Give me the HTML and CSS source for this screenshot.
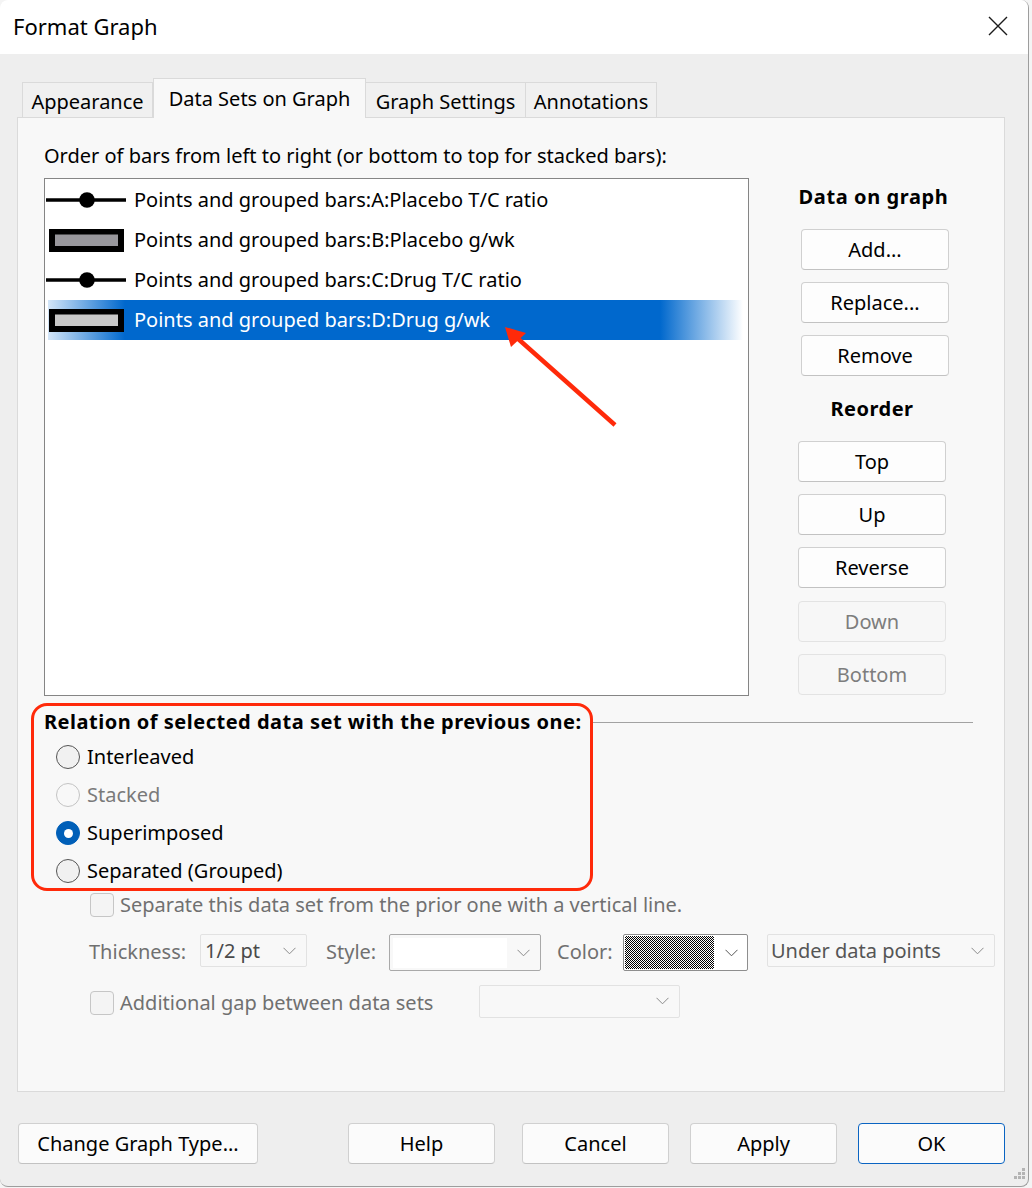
FILE: index.html
```html
<!DOCTYPE html>
<html>
<head>
<meta charset="utf-8">
<title>Format Graph</title>
<link rel="stylesheet" href="styles.css">
</head>
<body>
<div class="window">
  <div class="titlebar">
    <span class="title">Format Graph</span>
    <svg class="close" width="20" height="20" viewBox="0 0 20 20"><path d="M1 1 L19 19 M19 1 L1 19" stroke="#1b1b1b" stroke-width="1.4" fill="none"/></svg>
  </div>
  <div class="content">
    <div class="tabs">
      <div class="tab t1">Appearance</div>
      <div class="tab t2 active">Data Sets on Graph</div>
      <div class="tab t3">Graph Settings</div>
      <div class="tab t4">Annotations</div>
    </div>
    <div class="panel">
      <div class="top">
        <div class="leftcol">
          <div class="caption">Order of bars from left to right (or bottom to top for stacked bars):</div>
          <div class="listbox">
            <div class="row">
              <svg class="icon" width="80" height="40" viewBox="0 0 80 40"><line x1="0" y1="20" x2="80" y2="20" stroke="#000" stroke-width="3.5"/><circle cx="41" cy="20" r="7.8" fill="#000"/></svg>
              <span>Points and grouped bars:A:Placebo T/C ratio</span>
            </div>
            <div class="row">
              <svg class="icon" width="80" height="40" viewBox="0 0 80 40"><rect x="3" y="9" width="75" height="23" fill="#000"/><rect x="9" y="14.5" width="63" height="11.5" fill="#98979c"/></svg>
              <span>Points and grouped bars:B:Placebo g/wk</span>
            </div>
            <div class="row">
              <svg class="icon" width="80" height="40" viewBox="0 0 80 40"><line x1="0" y1="20" x2="80" y2="20" stroke="#000" stroke-width="3.5"/><circle cx="41" cy="20" r="7.8" fill="#000"/></svg>
              <span>Points and grouped bars:C:Drug T/C ratio</span>
            </div>
            <div class="row selected">
              <svg class="icon" width="80" height="40" viewBox="0 0 80 40"><rect x="3" y="9" width="75" height="23" fill="#000"/><rect x="9" y="14.5" width="63" height="11.5" fill="#c9c9c9"/></svg>
              <span>Points and grouped bars:D:Drug g/wk</span>
            </div>
          </div>
        </div>
        <div class="side">
          <div class="side-head">Data on graph</div>
          <div class="btn side-btn g1">Add...</div>
          <div class="btn side-btn g1">Replace...</div>
          <div class="btn side-btn g1">Remove</div>
          <div class="side-head reorder">Reorder</div>
          <div class="btn side-btn">Top</div>
          <div class="btn side-btn">Up</div>
          <div class="btn side-btn">Reverse</div>
          <div class="btn side-btn disabled down">Down</div>
          <div class="btn side-btn disabled">Bottom</div>
        </div>
      </div>

      <div class="relation">
        <div class="rel-head">
          <span class="rel-label">Relation of selected data set with the previous one:</span>
          <span class="rule"></span>
        </div>
        <div class="radio-row"><span class="radio"></span><span>Interleaved</span></div>
        <div class="radio-row dis"><span class="radio"></span><span>Stacked</span></div>
        <div class="radio-row"><span class="radio checked"></span><span>Superimposed</span></div>
        <div class="radio-row"><span class="radio"></span><span>Separated (Grouped)</span></div>
      </div>

      <div class="check-row first">
        <span class="checkbox"></span><span class="dim">Separate this data set from the prior one with a vertical line.</span>
      </div>

      <div class="ctrl-row">
        <span class="dim lbl-thick">Thickness:</span>
        <div class="select sel-thick"><span class="val">1/2 pt</span><svg class="chev" width="13" height="8" viewBox="0 0 13 8"><path d="M0.5 0.8 L6.5 6.8 L12.5 0.8" fill="none" stroke="#8a8a8a" stroke-width="1"/></svg></div>
        <span class="dim lbl-style">Style:</span>
        <div class="select sel-style"><span class="white-box"></span><svg class="chev" width="13" height="8" viewBox="0 0 13 8"><path d="M0.5 0.8 L6.5 6.8 L12.5 0.8" fill="none" stroke="#8a8a8a" stroke-width="1"/></svg></div>
        <span class="dim lbl-color">Color:</span>
        <div class="select sel-color"><span class="dither"></span><svg class="chev" width="13" height="8" viewBox="0 0 13 8"><path d="M0.5 0.8 L6.5 6.8 L12.5 0.8" fill="none" stroke="#555" stroke-width="1"/></svg></div>
        <div class="select sel-under"><span class="val under">Under data points</span><svg class="chev" width="13" height="8" viewBox="0 0 13 8"><path d="M0.5 0.8 L6.5 6.8 L12.5 0.8" fill="none" stroke="#8a8a8a" stroke-width="1"/></svg></div>
      </div>

      <div class="check-row gap-row">
        <span class="checkbox"></span><span class="dim gap-lbl">Additional gap between data sets</span>
        <div class="select sel-gap"><svg class="chev" width="13" height="8" viewBox="0 0 13 8"><path d="M0.5 0.8 L6.5 6.8 L12.5 0.8" fill="none" stroke="#8a8a8a" stroke-width="1"/></svg></div>
      </div>
    </div>

    <div class="footer">
      <div class="btn fbtn change">Change Graph Type...</div>
      <div class="btn fbtn help">Help</div>
      <div class="btn fbtn cancel">Cancel</div>
      <div class="btn fbtn apply">Apply</div>
      <div class="btn fbtn ok">OK</div>
    </div>
  </div>
  <svg class="grip" width="16" height="16" viewBox="0 0 16 16"><g fill="#b4b4b4"><rect x="12" y="0" width="3" height="3"/><rect x="8" y="4" width="3" height="3"/><rect x="12" y="4" width="3" height="3"/><rect x="4" y="8" width="3" height="3"/><rect x="8" y="8" width="3" height="3"/><rect x="12" y="8" width="3" height="3"/></g></svg>
</div>

<div class="redbox"></div>
<svg class="arrow" width="1032" height="1188" viewBox="0 0 1032 1188">
  <line x1="615" y1="425" x2="516" y2="337" stroke="#ff2a0a" stroke-width="4.5" stroke-linecap="butt"/>
  <polygon points="505,327 526,333 511,347" fill="#ff2a0a"/>
</svg>
</body>
</html>
```

FILE: styles.css
```css
* { box-sizing: border-box; }
html, body { margin: 0; padding: 0; }
body {
  width: 1032px;
  height: 1188px;
  overflow: hidden;
  position: relative;
  background: #f4f4f4;
  font-family: "Noto Sans", "Open Sans", sans-serif;
  font-size: 20px;
  color: #000;
}
.window {
  position: relative;
  width: 1029px;
  height: 1187px;
  background: #eeeeee;
  border-right: 1px solid #9d9d9d;
  border-bottom: 1px solid #9d9d9d;
  border-radius: 8px;
  overflow: hidden;
  display: flex;
  flex-direction: column;
}
.titlebar {
  height: 54px;
  flex: none;
  background: #ffffff;
  display: flex;
  align-items: center;
  justify-content: space-between;
  padding: 0 20px 0 13px;
}
.title { font-size: 22px; line-height: 30px; margin-top: -2px; }
.close { margin-top: -2px; }

.content {
  flex: 1;
  padding: 24px 0 0 17px;
  display: flex;
  flex-direction: column;
}
.tabs {
  display: flex;
  align-items: flex-end;
  height: 39px;
  padding-left: 5px;
  position: relative;
  z-index: 2;
}
.tab {
  height: 35px;
  display: flex;
  align-items: center;
  justify-content: center;
  background: #f0f0f0;
  border: 1px solid #dadada;
  border-bottom: none;
  line-height: 28px;
  padding-top: 3px;
}
.tab + .tab { border-left: none; }
.tab.t1 { width: 131px; }
.tab.t2 { width: 213px; }
.tab.t3 { width: 160px; }
.tab.t4 { width: 131px; }
.tab.active {
  background: #f8f8f8;
  border-left: 1px solid #dadada;
  padding-top: 0;
  margin-bottom: -1px;
  height: 40px;
}

.panel {
  width: 988px;
  height: 975px;
  flex: none;
  background: #f8f8f8;
  border: 1px solid #dadada;
  padding: 24px 0 0 26px;
  position: relative;
  z-index: 1;
}
.top { display: flex; height: 554px; }
.leftcol { width: 705px; flex: none; }
.caption { line-height: 28px; height: 28px; white-space: nowrap; }
.listbox {
  margin-top: 8px;
  width: 705px;
  height: 518px;
  background: #ffffff;
  border: 1px solid #858585;
  padding-top: 1px;
}
.row {
  height: 40px;
  display: flex;
  align-items: center;
  padding-left: 1px;
  white-space: nowrap;
}
.row .icon { flex: none; display: block; }
.row span { margin-left: 8px; line-height: 28px; }
.row.selected {
  color: #ffffff;
  background: linear-gradient(to right,
    transparent 0, transparent 3px,
    #d4e6f8 3px, #0068cd 80px,
    #0068cd 615px, #ffffff 698px,
    transparent 698px, transparent 100%);
}

.side {
  margin-left: 49px;
  width: 151px;
  flex: none;
  display: flex;
  flex-direction: column;
  padding-top: 41px;
}
.side-head {
  font-weight: bold;
  text-align: center;
  line-height: 28px;
  height: 28px;
  margin-bottom: 18px;
  letter-spacing: 0.6px;
  white-space: nowrap;
}
.side-head.reorder { margin-top: 7px; width: 148px; letter-spacing: 0.5px; }
.btn {
  height: 41px;
  display: flex;
  align-items: center;
  justify-content: center;
  background: #fdfdfd;
  border: 1px solid #d0d0d0;
  border-bottom-color: #c2c2c2;
  border-radius: 4px;
  line-height: 28px;
  white-space: nowrap;
}
.side-btn { width: 148px; margin-bottom: 12px; flex: none; }
.side-btn.g1 { margin-left: 3px; }
.side-btn.down { margin-top: 1px; }
.btn.disabled {
  background: #f7f7f7;
  border-color: #e3e3e3;
  color: #7d7d7d;
}

.relation { margin-top: 12px; }
.rel-head {
  display: flex;
  align-items: center;
  height: 28px;
  width: 929px;
}
.rel-label { font-weight: bold; line-height: 28px; white-space: nowrap; letter-spacing: 0.5px; }
.rule { flex: 1; height: 1px; background: #a2a2a2; margin-left: 8px; }
.radio-row {
  height: 38px;
  display: flex;
  align-items: center;
  padding-left: 12px;
  line-height: 28px;
}
.relation .rel-head + .radio-row { margin-top: 2px; }
.radio {
  width: 24px;
  height: 24px;
  border-radius: 50%;
  border: 1.5px solid #555555;
  background: #f1f1f1;
  margin-right: 7px;
  flex: none;
  position: relative;
}
.radio-row.dis { color: #7a7a7a; }
.radio-row.dis .radio { border-color: #c4c4c4; background: #f8f8f8; }
.radio.checked { background: #005fb8; border-color: #005fb8; }
.radio.checked::after {
  content: "";
  position: absolute;
  left: 50%; top: 50%;
  width: 9px; height: 9px;
  margin: -4.5px 0 0 -4.5px;
  border-radius: 50%;
  background: #ffffff;
}

.dim { color: #707070; }
.check-row {
  display: flex;
  align-items: center;
  padding-left: 46px;
  line-height: 28px;
  white-space: nowrap;
}
.check-row.first { height: 28px; margin-top: 1px; }
.checkbox {
  width: 24px;
  height: 24px;
  border: 1px solid #c6c6c6;
  border-radius: 4px;
  background: #f4f4f4;
  margin-right: 6px;
  flex: none;
}
.ctrl-row {
  display: flex;
  align-items: flex-start;
  margin-top: 15px;
  padding-left: 45px;
  height: 37px;
  white-space: nowrap;
}
.ctrl-row .dim { line-height: 28px; padding-top: 4px; }
.lbl-thick { width: 111px; }
.lbl-style { margin-left: 19px; width: 63px; }
.lbl-color { margin-left: 16px; width: 66px; }
.select {
  display: flex;
  align-items: center;
  justify-content: space-between;
  height: 33px;
  background: #f8f8f8;
  border: 1px solid #e2e2e2;
  border-radius: 2px;
  position: relative;
}
.select .val { padding-left: 4px; line-height: 28px; color: #4a4a4a; }
.select .val.under { color: #555; }
.select .chev { margin-right: 10px; flex: none; }
.sel-thick { width: 107px; }
.sel-style {
  width: 152px;
  height: 37px;
  border: 1px solid #a9a9a9;
  padding-left: 3px;
}
.white-box { width: 114px; height: 30px; background: #ffffff; }
.sel-color {
  width: 125px;
  height: 37px;
  border: 1px solid #8e8e8e;
  background: #ffffff;
  padding-left: 1px;
}
.dither {
  width: 89px;
  height: 33px;
  background: repeating-conic-gradient(#000 0 25%, #fff 0 50%) 0 0 / 2px 2px;
}
.sel-color .chev { margin-right: 9px; }
.sel-under { width: 228px; margin-left: 19px; }
.sel-under .val { padding-left: 3px; }

.gap-row { margin-top: 13px; height: 37px; align-items: center; }
.gap-lbl { width: 359px; padding-top: 0; }
.sel-gap { width: 201px; justify-content: flex-end; margin-top: -3px; }

.footer {
  display: flex;
  margin-top: 31px;
  padding-left: 1px;
}
.fbtn { background: #fbfbfb; }
.change { width: 240px; }
.help { width: 147px; margin-left: 90px; }
.cancel { width: 147px; margin-left: 27px; }
.apply { width: 147px; margin-left: 21px; }
.ok { width: 147px; margin-left: 21px; border: 1.5px solid #0a64c2; }

.grip { position: absolute; right: 2px; bottom: 2px; }

.redbox {
  position: absolute;
  z-index: 10;
  left: 31px;
  top: 703px;
  width: 562px;
  height: 188px;
  border: 3px solid #ff2a0a;
  border-radius: 16px;
  pointer-events: none;
}
.arrow { position: absolute; z-index: 11; left: 0; top: 0; pointer-events: none; }
```
